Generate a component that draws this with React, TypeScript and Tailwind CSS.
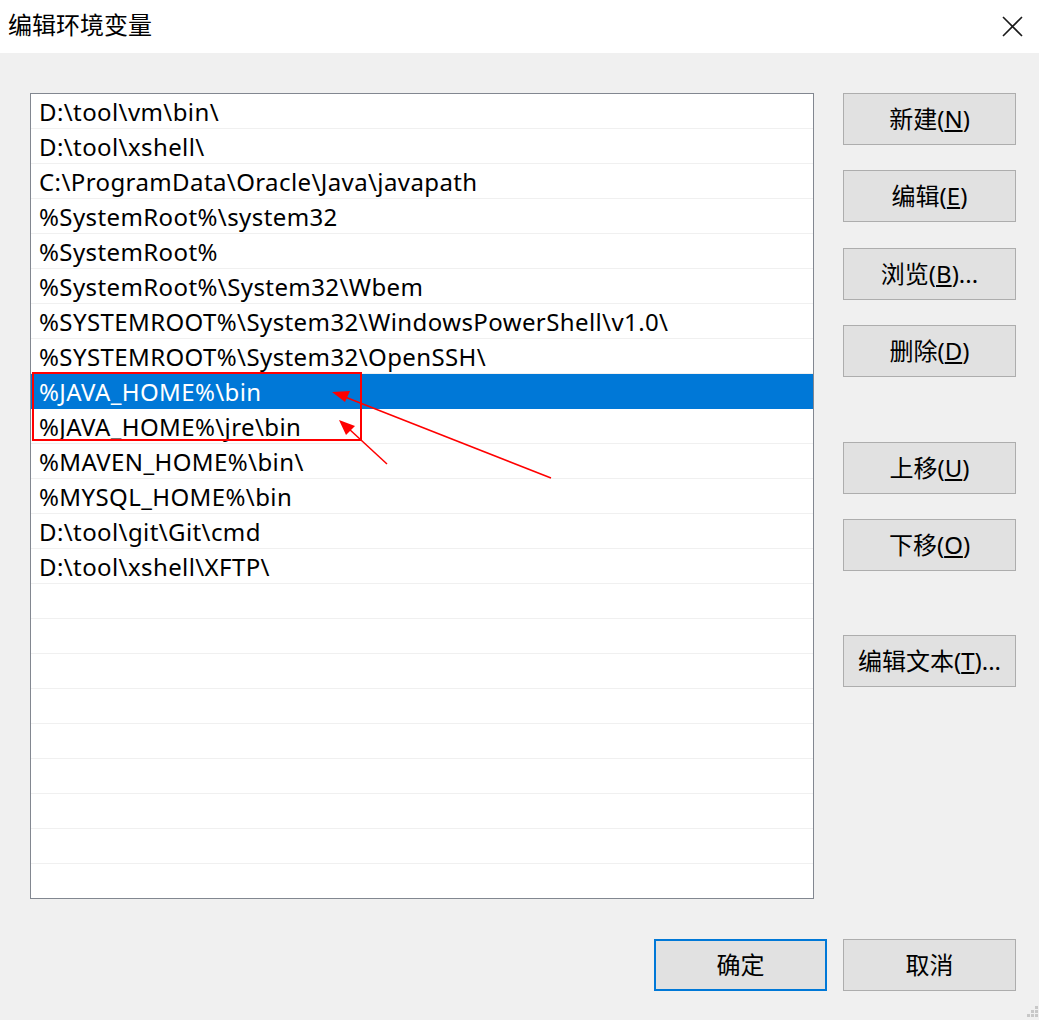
import React from 'react';

const paths = [
  'D:\\tool\\vm\\bin\\',
  'D:\\tool\\xshell\\',
  'C:\\ProgramData\\Oracle\\Java\\javapath',
  '%SystemRoot%\\system32',
  '%SystemRoot%',
  '%SystemRoot%\\System32\\Wbem',
  '%SYSTEMROOT%\\System32\\WindowsPowerShell\\v1.0\\',
  '%SYSTEMROOT%\\System32\\OpenSSH\\',
  '%JAVA_HOME%\\bin',
  '%JAVA_HOME%\\jre\\bin',
  '%MAVEN_HOME%\\bin\\',
  '%MYSQL_HOME%\\bin',
  'D:\\tool\\git\\Git\\cmd',
  'D:\\tool\\xshell\\XFTP\\',
];

const rows = [...paths, ...Array(23 - paths.length).fill('')];

const font = { fontFamily: '"Noto Sans", "Noto Sans CJK SC", sans-serif' };

function WinButton({ label, hot, suffix = '', primary = false, className = '' }: { label: string; hot?: string; suffix?: string; primary?: boolean; className?: string }) {
  return (
    <button
      className={`w-[173px] h-[52px] bg-[#e1e1e1] text-[24px] text-black flex items-center justify-center ${
        primary ? 'border-2 border-[#0078d7]' : 'border border-[#adadad]'
      } ${className}`}
    >
      {label}
      {hot && (
        <>
          (<span className="underline underline-offset-2">{hot}</span>){suffix}
        </>
      )}
    </button>
  );
}

export default function App() {
  return (
    <div className="w-[1039px] h-[1020px] bg-[#f0f0f0] relative overflow-hidden" style={font}>
      {/* Title bar */}
      <div className="h-[53px] bg-white flex items-center justify-between pl-2">
        <span className="text-[24px] text-black leading-none -mt-1">编辑环境变量</span>
        <div className="w-[54px] h-[53px] flex items-center justify-center">
          <svg width="21" height="21" viewBox="0 0 21 21">
            <path d="M1 1 L20 20 M20 1 L1 20" stroke="#1a1a1a" strokeWidth="1.6" />
          </svg>
        </div>
      </div>

      {/* Body */}
      <div className="flex pl-[30px] pt-[40px] gap-[29px]">
        <div className="w-[784px] h-[806px] bg-white border border-[#828790] overflow-hidden">
          {rows.map((p, i) => (
            <div
              key={i}
              className={`h-[35px] pl-[8px] pt-[2px] flex items-center text-[24px] tracking-[0.4px] leading-none whitespace-nowrap border-b ${
                i === 8 ? 'bg-[#0078d7] text-white border-[#0078d7]' : 'text-black border-[#f0f0f0]'
              }`}
            >
              {p}
            </div>
          ))}
        </div>

        <div className="flex flex-col">
          <WinButton label="新建" hot="N" />
          <WinButton label="编辑" hot="E" className="mt-[25px]" />
          <WinButton label="浏览" hot="B" suffix="..." className="mt-[26px]" />
          <WinButton label="删除" hot="D" className="mt-[25px]" />
          <WinButton label="上移" hot="U" className="mt-[65px]" />
          <WinButton label="下移" hot="O" className="mt-[25px]" />
          <WinButton label="编辑文本" hot="T" suffix="..." className="mt-[64px]" />
        </div>
      </div>

      {/* Footer */}
      <div className="flex justify-end gap-[16px] pr-[23px] mt-[40px]">
        <WinButton label="确定" primary />
        <WinButton label="取消" />
      </div>

      {/* Resize grip */}
      <svg className="absolute right-0 bottom-0" width="14" height="16" viewBox="0 0 14 16">
        <g fill="#c8c8c8">
          <rect x="10" y="2" width="3" height="3" />
          <rect x="6" y="6" width="3" height="3" />
          <rect x="10" y="6" width="3" height="3" />
          <rect x="2" y="10" width="3" height="3" />
          <rect x="6" y="10" width="3" height="3" />
          <rect x="10" y="10" width="3" height="3" />
        </g>
      </svg>

      {/* Red annotation */}
      <svg className="absolute left-0 top-0 pointer-events-none" width="1039" height="1020">
        <rect x="33" y="373" width="328" height="67" fill="none" stroke="#ff0000" strokeWidth="2" />
        <line x1="551" y1="478" x2="345" y2="397" stroke="#ff0000" strokeWidth="1.5" />
        <polygon points="332,392 350,391 345,402" fill="#ff0000" />
        <line x1="387" y1="464" x2="348" y2="428" stroke="#ff0000" strokeWidth="1.5" />
        <polygon points="339,420 355,426 346,435" fill="#ff0000" />
      </svg>
    </div>
  );
}
